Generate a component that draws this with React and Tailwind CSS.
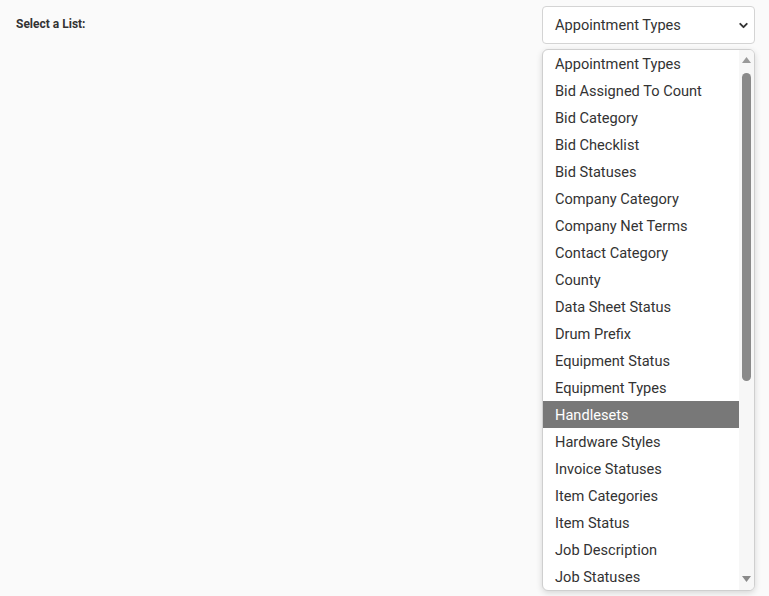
import { ChevronDown } from 'lucide-react'

const LISTS = [
  'Appointment Types',
  'Bid Assigned To Count',
  'Bid Category',
  'Bid Checklist',
  'Bid Statuses',
  'Company Category',
  'Company Net Terms',
  'Contact Category',
  'County',
  'Data Sheet Status',
  'Drum Prefix',
  'Equipment Status',
  'Equipment Types',
  'Handlesets',
  'Hardware Styles',
  'Invoice Statuses',
  'Item Categories',
  'Item Status',
  'Job Description',
  'Job Statuses',
]

const ACTIVE = 'Handlesets'

export default function App() {
  return (
    <div className="min-h-[596px] bg-[#fafafa] text-[#333] font-['Roboto',sans-serif] flex justify-between pl-4 pr-[14px] pt-[6px]">
      {/* Label */}
      <div className="pt-[12px] text-[12px] font-bold leading-none">Select a List:</div>

      {/* Select + open dropdown */}
      <div className="w-[213px] flex flex-col gap-[5px]">
        <div className="h-[38px] bg-white border border-[#d4d4d4] rounded-[4px] flex items-center justify-between pl-[12px] pr-[4px]">
          <span className="text-[14.6px] pt-px">Appointment Types</span>
          <ChevronDown className="w-[13px] h-[13px] text-[#333]" strokeWidth={3.5} />
        </div>

        <div className="h-[542px] bg-white border border-[#cfcfcf] rounded-[6px] shadow-[0_2px_6px_rgba(0,0,0,0.15)] flex overflow-hidden">
          <ul className="flex-1 flex flex-col">
            {LISTS.map(name => (
              <li
                key={name}
                className={`h-[27px] flex items-center pl-[12px] pt-[2px] text-[14.6px] ${
                  name === ACTIVE ? 'bg-[#787878] text-white' : ''
                }`}
              >
                {name}
              </li>
            ))}
          </ul>

          {/* Scrollbar */}
          <div className="w-[15px] bg-[#f7f7f7] flex flex-col items-center pt-[7px] pb-[8px]">
            <svg width="9" height="6" viewBox="0 0 9 6"><path d="M4.5 0L9 6H0z" fill="#9a9a9a" /></svg>
            <div className="mt-[10px] w-[9px] h-[308px] rounded-full bg-[#8a8a8a]" />
            <div className="flex-1" />
            <svg width="9" height="6" viewBox="0 0 9 6"><path d="M0 0h9L4.5 6z" fill="#8a8a8a" /></svg>
          </div>
        </div>
      </div>
    </div>
  )
}
